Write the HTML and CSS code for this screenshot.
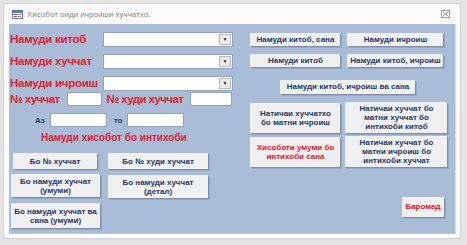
FILE: index.html
```html
<!DOCTYPE html>
<html lang="tg">
<head>
    <meta charset="UTF-8">
    <title>Хисобот оиди ичроиши хуччатхо</title>
    <link rel="stylesheet" href="styles.css">
</head>
<body>
    <div class="window">
        <div class="titlebar">
            <svg class="formicon" width="11" height="9" viewBox="0 0 11 9">
                <rect x="0.5" y="0.5" width="10" height="8" fill="#fff" stroke="#5a7bb5"/>
                <rect x="1" y="1" width="9" height="2" fill="#5a7bb5"/>
                <rect x="2" y="4" width="3" height="1" fill="#c03030"/>
                <rect x="6" y="4" width="3" height="1" fill="#7a8fb5"/>
                <rect x="2" y="6" width="3" height="1" fill="#c03030"/>
                <rect x="6" y="6" width="3" height="1" fill="#7a8fb5"/>
            </svg>
            <span class="title">Хисобот оиди ичроиши хуччатхо.</span>
            <svg class="close" width="9" height="8" viewBox="0 0 9 8">
                <rect x="0.5" y="0.5" width="8" height="7" fill="none" stroke="#9a9a9a"/>
                <path d="M2 2 L7 6 M7 2 L2 6" stroke="#8a8a8a" stroke-width="1"/>
            </svg>
        </div>

        <div class="panel">
            <div class="leftcol">
                <div class="row">
                    <span class="lbl wide">Намуди китоб</span>
                    <div class="combo"><span class="arrow">▼</span></div>
                </div>
                <div class="row">
                    <span class="lbl wide">Намуди хуччат</span>
                    <div class="combo"><span class="arrow">▼</span></div>
                </div>
                <div class="row">
                    <span class="lbl wide">Намуди ичроиш</span>
                    <div class="combo"><span class="arrow">▼</span></div>
                </div>
                <div class="row numrow">
                    <span class="lbl">№ хуччат</span>
                    <div class="field f1"></div>
                    <span class="lbl">№ худи хуччат</span>
                    <div class="field f2"></div>
                </div>
                <div class="row daterow">
                    <span class="small">Аз</span>
                    <div class="field f3"></div>
                    <span class="small">то</span>
                    <div class="field f3"></div>
                </div>
                <div class="heading">Намуди хисобот бо интихоби</div>

                <div class="btngrid">
                    <button class="btn b1">Бо № хуччат</button>
                    <button class="btn b2">Бо № худи хуччат</button>
                    <button class="btn b3">Бо намуди хуччат (умуми)</button>
                    <button class="btn b2 tall">Бо намуди хуччат (детал)</button>
                    <button class="btn b3 taller">Бо намуди хуччат ва сана (умуми)</button>
                </div>
            </div>

            <div class="rightcol">
                <div class="pair">
                    <button class="btn r1">Намуди китоб, сана</button>
                    <button class="btn r2">Намуди ичроиш</button>
                </div>
                <div class="pair">
                    <button class="btn r1">Намуди китоб</button>
                    <button class="btn r2">Намуди китоб, ичроиш</button>
                </div>
                <div class="center">
                    <button class="btn r3">Намуди китоб, ичроиш ва сана</button>
                </div>
                <div class="pair big">
                    <button class="btn r1 h2">Натичаи хуччатхо бо матни ичроиш</button>
                    <button class="btn r4 h3">Натичаи хуччат бо матни хуччат бо интихоби китоб</button>
                </div>
                <div class="pair big">
                    <button class="btn r1 h2 red">Хисоботи умуми бо интихоби сана</button>
                    <button class="btn r4 h3">Натичаи хуччат бо матни ичроиш бо интихоби хуччат</button>
                </div>
                <div class="exitrow">
                    <button class="btn exit red">Баромад</button>
                </div>
            </div>
        </div>
    </div>
</body>
</html>
```

FILE: styles.css
```css
body {
    margin: 0;
    background-color: #e4e4e4;
    font-family: "Liberation Sans", Arial, sans-serif;
}

.window {
    margin: 3px 0 0 3px;
    width: 458px;
    height: 236px;
    background-color: #fbfbfb;
    border: 1px solid #d2d2d2;
    box-sizing: border-box;
    display: flex;
    flex-direction: column;
}

.titlebar {
    height: 20px;
    display: flex;
    align-items: center;
    padding: 0 8px;
}

.formicon {
    margin-right: 4px;
}

.title {
    font-size: 8px;
    color: #8a8a8a;
    flex: 1;
    padding-top: 1px;
}

.close {
    margin-right: 2px;
}

.panel {
    margin: 0 4px 0 5px;
    height: 209px;
    background-color: #a9bdd8;
    border-right: 1px solid #d8dee8;
    border-bottom: 1px solid #c6ccd6;
    display: flex;
}

.leftcol {
    width: 236px;
    padding: 8px 0 0 1px;
}

.row {
    display: flex;
    align-items: center;
    height: 14px;
    margin-bottom: 8px;
}

.lbl {
    color: #e0202c;
    font-weight: bold;
    font-size: 11.5px;
    letter-spacing: -0.25px;
    white-space: nowrap;
}

.lbl.wide {
    width: 93px;
}

.combo {
    width: 128px;
    height: 13px;
    background-color: #fff;
    border: 1px solid #8ea3c2;
    position: relative;
}

.arrow {
    position: absolute;
    right: 1px;
    top: 1px;
    width: 10px;
    height: 9px;
    background-color: #ececec;
    border: 1px solid #b8b8b8;
    font-size: 5px;
    line-height: 9px;
    text-align: center;
    color: #222;
}

.numrow {
    margin-top: -6px;
    height: 14px;
    width: 222px;
}

.numrow .lbl {
    letter-spacing: -0.6px;
}

.field {
    height: 12px;
    background-color: #fff;
    border: 1px solid #8ea3c2;
}

.f1 {
    width: 33px;
    margin: 0 5px 0 7px;
}

.f2 {
    flex: 1;
    margin-left: 7px;
}

.daterow {
    margin-top: -1px;
    padding-left: 25px;
    height: 14px;
}

.small {
    color: #1f3868;
    font-weight: bold;
    font-size: 8px;
}

.f3 {
    width: 55px;
    margin: 0 7px 0 5px;
}

.heading {
    color: #e0202c;
    font-weight: bold;
    font-size: 10px;
    margin: -3px 0 0 31px;
    height: 14px;
}

.btngrid {
    display: grid;
    grid-template-columns: 90px 100px;
    column-gap: 7px;
    row-gap: 6px;
    margin: 7px 0 0 1px;
    align-items: start;
}

.btn {
    font-family: "Liberation Sans", Arial, sans-serif;
    font-weight: bold;
    font-size: 8px;
    line-height: 9px;
    color: #1f3868;
    background-color: #f0f0f0;
    border: none;
    box-shadow: 1px 1px 0 #7f8fa8, 2px 2px 0 #98a8c0;
    padding: 1px;
    margin: 0;
    text-align: center;
}

.b1 {
    width: 84px;
    height: 16px;
    margin-left: 2px;
}

.b2 {
    width: 100px;
    height: 16px;
}

.b3 {
    width: 89px;
    height: 23px;
    margin-top: -1px;
}

.b2.tall {
    height: 23px;
}

.b3.taller {
    height: 25px;
}

.rightcol {
    padding: 9px 0 0 5px;
    width: 205px;
}

.pair {
    display: flex;
    gap: 7px;
    margin-bottom: 8px;
}

.btn.r1 {
    width: 90px;
    height: 13px;
}

.btn.r2 {
    width: 96px;
    height: 13px;
}

.center {
    padding-left: 30px;
    margin-bottom: 8px;
}

.btn.r3 {
    width: 135px;
    height: 14px;
}

.pair.big {
    margin-bottom: 3px;
    gap: 5px;
}

.btn.r4 {
    width: 102px;
}

.btn.h2 {
    height: 30px;
    margin-top: 1px;
    padding: 1px 4px;
}

.btn.h3 {
    height: 31px;
}

.btn.red {
    color: #e8141e;
}

.exitrow {
    display: flex;
    justify-content: flex-end;
    padding-right: 11px;
    margin-top: 30px;
}

.btn.exit {
    width: 42px;
    height: 20px;
}
```
